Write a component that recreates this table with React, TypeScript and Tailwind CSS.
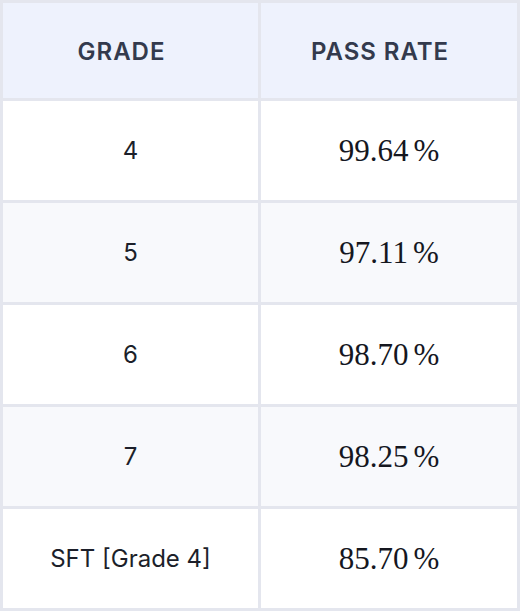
import React from 'react'

const rows = [
  { grade: '4', rate: '99.64' },
  { grade: '5', rate: '97.11' },
  { grade: '6', rate: '98.70' },
  { grade: '7', rate: '98.25' },
  { grade: 'SFT [Grade 4]', rate: '85.70' },
]

export default function App() {
  return (
    <div className="w-[520px] h-[611px] bg-[#e4e6ee] p-[3px] font-['Inter',sans-serif]">
      <div className="grid grid-cols-[255px_256px] grid-rows-[95px_repeat(5,99px)] gap-[3px]">
        <div className="flex items-center justify-center pr-[18px] pt-[3px] bg-[#eef2fd] text-[24px] font-semibold tracking-[0.04em] text-[#333a4d]">
          GRADE
        </div>
        <div className="flex items-center justify-center pr-[18px] pt-[3px] bg-[#eef2fd] text-[24px] font-semibold tracking-[0.04em] text-[#333a4d]">
          PASS RATE
        </div>
        {rows.map((r, i) => (
          <React.Fragment key={r.grade}>
            <div
              className={`flex items-center justify-center text-[24px] text-[#1c1f2a] ${
                i % 2 === 1 ? 'bg-[#f8f9fc]' : 'bg-white'
              }`}
            >
              {r.grade}
            </div>
            <div
              className={`flex items-center justify-center pt-[2px] text-[31px] text-[#15171f] font-['Liberation_Serif',serif] ${
                i % 2 === 1 ? 'bg-[#f8f9fc]' : 'bg-white'
              }`}
            >
              {r.rate}
              <span className="ml-[5px]">%</span>
            </div>
          </React.Fragment>
        ))}
      </div>
    </div>
  )
}
